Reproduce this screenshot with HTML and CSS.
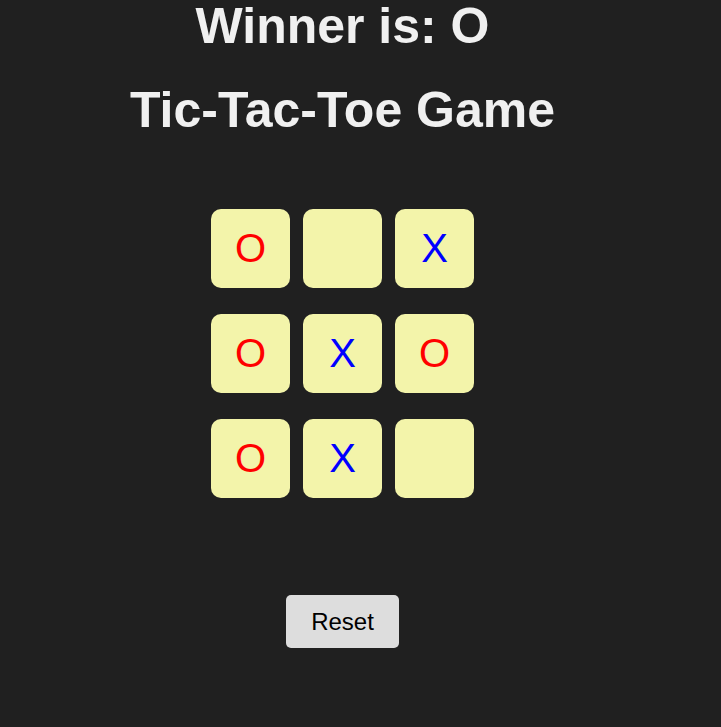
FILE: index.html
```html
<!DOCTYPE html>
<html>
<head>
<meta charset="utf-8">
<link rel="stylesheet" href="styles.css">
</head>
<body>
<div class="app">
  <h2 class="status">Winner is: O</h2>
  <h1 class="title">Tic-Tac-Toe Game</h1>
  <div class="board">
    <div class="row">
      <div class="cell o">O</div>
      <div class="cell"></div>
      <div class="cell x">X</div>
    </div>
    <div class="row">
      <div class="cell o">O</div>
      <div class="cell x">X</div>
      <div class="cell o">O</div>
    </div>
    <div class="row">
      <div class="cell o">O</div>
      <div class="cell x">X</div>
      <div class="cell"></div>
    </div>
  </div>
  <button class="reset">Reset</button>
</div>
</body>
</html>
```
FILE: styles.css
```css
html, body {
  margin: 0;
  padding: 0;
  background: #202020;
  font-family: "Liberation Sans", Arial, sans-serif;
}
.app {
  width: 685px;
  display: flex;
  flex-direction: column;
  align-items: center;
}
.status {
  margin: 0;
  height: 52px;
  line-height: 52px;
  font-size: 50px;
  font-weight: bold;
  color: #f0f0f0;
}
.title {
  margin: 32px 0 0;
  line-height: 52px;
  font-size: 50px;
  font-weight: bold;
  color: #f0f0f0;
}
.board {
  margin-top: 73px;
  display: flex;
  flex-direction: column;
  gap: 26px;
}
.row {
  display: flex;
  gap: 13px;
}
.cell {
  width: 79px;
  height: 79px;
  border-radius: 10px;
  background: #f3f4aa;
  display: flex;
  align-items: center;
  justify-content: center;
  font-size: 40px;
}
.cell.o { color: #ff0000; }
.cell.x { color: #0000ff; }
.reset {
  margin-top: 97px;
  width: 113px;
  height: 53px;
  border: none;
  border-radius: 5px;
  background: #dddddd;
  color: #000;
  font-family: "Liberation Sans", Arial, sans-serif;
  font-size: 24px;
}
```
